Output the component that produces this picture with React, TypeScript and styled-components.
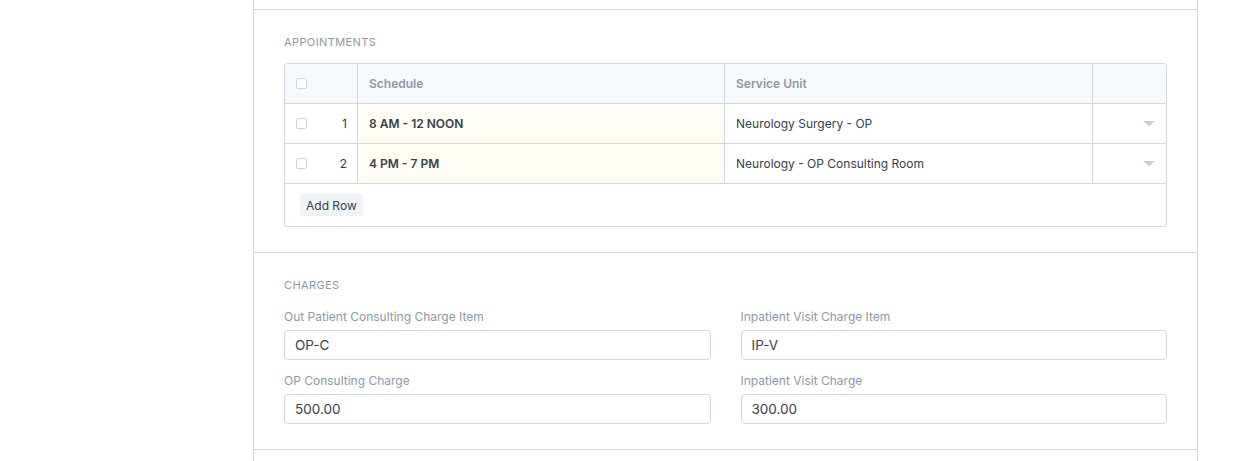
import React, {FC} from 'react';
import styled, {createGlobalStyle} from 'styled-components';

const GlobalStyle=createGlobalStyle`
body{
margin:0;
background:#fff;
font-family:Inter, "Noto Sans", sans-serif;
color:#36414c;
}
*{box-sizing:border-box;}
`;

const Page=styled.div`
display:flex;
padding-left:253px;
`;

const Panel=styled.div`
width:945px;
border-left:1px solid #d1d8dd;
border-right:1px solid #d1d8dd;
padding:9px 0 20px 0;
`;

const Section=styled.div`
border-top:1px solid #d1d8dd;
padding:26px 30px 25px 30px;
&:last-child{
border-bottom:1px solid #d1d8dd;
}
`;

const SectionHead=styled.div`
font-size:11px;
letter-spacing:0.4px;
text-transform:uppercase;
color:#8d99a6;
line-height:12px;
margin-bottom:15px;
`;

const Table=styled.div`
border:1px solid #d1d8dd;
border-radius:3px;
`;

const Row=styled.div<{head?:boolean}>`
display:grid;
grid-template-columns:72px 367px 368px 1fr;
height:40px;
border-bottom:1px solid #d1d8dd;
background:${p=>p.head?'#f7fafc':'#fff'};
font-size:12px;
`;

const Cell=styled.div<{head?:boolean;bold?:boolean;tint?:boolean}>`
display:flex;
align-items:center;
padding:0 11px;
border-left:1px solid #d1d8dd;
font-weight:${p=>p.head||p.bold?600:400};
color:${p=>p.head?'#8d99a6':'#36414c'};
background:${p=>p.tint?'#fffdf4':'transparent'};
&:first-child{border-left:none;}
`;

const IdxCell=styled.div`
display:flex;
align-items:center;
justify-content:space-between;
padding:0 10px 0 11px;
color:#36414c;
font-size:12px;
`;

const Check=styled.span`
display:inline-block;
width:11px;
height:11px;
border:1px solid #d1d8dd;
border-radius:2px;
background:#fff;
`;

const Caret=styled.span`
margin-left:auto;
width:0;
height:0;
border-left:6px solid transparent;
border-right:6px solid transparent;
border-top:5px solid #c7cdd3;
`;

const Footer=styled.div`
display:flex;
align-items:center;
height:42px;
padding:0 15px;
`;

const Button=styled.button`
font-family:inherit;
font-size:12px;
color:#36414c;
background:#f0f4f7;
border:none;
border-radius:3px;
padding:0 6px;
height:22px;
`;

const Grid=styled.div`
display:grid;
grid-template-columns:1fr 1fr;
column-gap:30px;
padding-top:4px;
`;

const Column=styled.div`
display:flex;
flex-direction:column;
gap:14px;
`;

const Field=styled.div`
display:flex;
flex-direction:column;
`;

const Label=styled.div`
font-size:12px;
color:#8d99a6;
line-height:14px;
margin-bottom:6px;
`;

const Input=styled.div`
height:30px;
border:1px solid #d1d8dd;
border-radius:4px;
display:flex;
align-items:center;
padding:0 10px;
font-size:13.5px;
color:#36414c;
`;

const rows=[
    {n:1,sched:'8 AM - 12 NOON',unit:'Neurology Surgery - OP'},
    {n:2,sched:'4 PM - 7 PM',unit:'Neurology - OP Consulting Room'},
];

const App:FC=()=>{
    return(
        <Page>
            <GlobalStyle/>
            <Panel>
                <Section>
                    <SectionHead>Appointments</SectionHead>
                    <Table>
                        <Row head>
                            <IdxCell><Check/></IdxCell>
                            <Cell head>Schedule</Cell>
                            <Cell head>Service Unit</Cell>
                            <Cell head></Cell>
                        </Row>
                        {rows.map(r=>(
                            <Row key={r.n}>
                                <IdxCell><Check/><span>{r.n}</span></IdxCell>
                                <Cell bold tint>{r.sched}</Cell>
                                <Cell>{r.unit}</Cell>
                                <Cell><Caret/></Cell>
                            </Row>
                        ))}
                        <Footer><Button>Add Row</Button></Footer>
                    </Table>
                </Section>
                <Section>
                    <SectionHead>Charges</SectionHead>
                    <Grid>
                        <Column>
                            <Field>
                                <Label>Out Patient Consulting Charge Item</Label>
                                <Input>OP-C</Input>
                            </Field>
                            <Field>
                                <Label>OP Consulting Charge</Label>
                                <Input>500.00</Input>
                            </Field>
                        </Column>
                        <Column>
                            <Field>
                                <Label>Inpatient Visit Charge Item</Label>
                                <Input>IP-V</Input>
                            </Field>
                            <Field>
                                <Label>Inpatient Visit Charge</Label>
                                <Input>300.00</Input>
                            </Field>
                        </Column>
                    </Grid>
                </Section>
            </Panel>
        </Page>
    );
}

export default App;
